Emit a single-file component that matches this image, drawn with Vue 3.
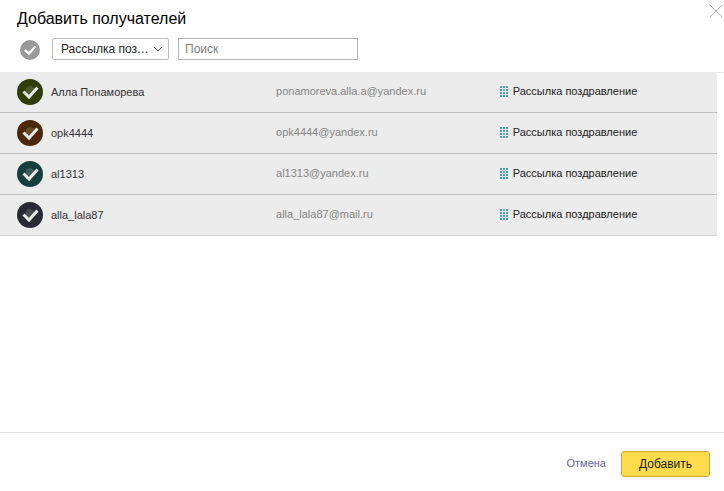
<script setup>
import { ref, computed } from 'vue'

const group = ref('greeting')
const query = ref('')
const recipients = ref([
  { id: 1, name: 'Алла Понаморева', email: 'ponamoreva.alla.a@yandex.ru', color: '#303c04', checked: true },
  { id: 2, name: 'opk4444', email: 'opk4444@yandex.ru', color: '#4a2a06', checked: true },
  { id: 3, name: 'al1313', email: 'al1313@yandex.ru', color: '#153f3c', checked: true },
  { id: 4, name: 'alla_lala87', email: 'alla_lala87@mail.ru', color: '#2a2a34', checked: true }
])

const visible = computed(() => {
  const q = query.value.trim().toLowerCase()
  return recipients.value.filter((r) => (r.name + ' ' + r.email).toLowerCase().includes(q))
})

const allChecked = computed({
  get: () => recipients.value.every((r) => r.checked),
  set: (value) => recipients.value.forEach((r) => { r.checked = value })
})

const dots = [0, 1, 2, 3].flatMap((row) => [0, 1, 2].map((col) => ({ x: col * 3, y: row * 3 })))
</script>

<template>
  <main class="dialog">
    <header class="head">
      <h1 class="title">Добавить получателей</h1>
      <div class="filters">
        <label class="pick pick-all">
          <input v-model="allChecked" type="checkbox" class="dot" aria-label="Выбрать всех" />
          <svg class="tick" viewBox="0 0 26 26" aria-hidden="true">
            <path d="M6.5 13 11.5 18 20 8" />
          </svg>
        </label>
        <div class="select">
          <select v-model="group" aria-label="Группа">
            <option value="greeting">Рассылка поздравление</option>
          </select>
          <svg class="chevron" viewBox="0 0 10 6" aria-hidden="true"><path d="M1 1 5 5 9 1" /></svg>
        </div>
        <input v-model="query" class="search" type="text" placeholder="Поиск" aria-label="Поиск" />
      </div>
      <button class="close" type="button" aria-label="Закрыть">
        <svg viewBox="0 0 14 14" aria-hidden="true"><path d="M1 1 13 13M13 1 1 13" /></svg>
      </button>
    </header>

    <div class="list">
      <table class="table">
        <tbody>
          <tr v-for="r in visible" :key="r.id">
            <td class="col-name">
              <label class="person">
                <span class="pick">
                  <input v-model="r.checked" type="checkbox" class="dot" :style="{ backgroundColor: r.color }" />
                  <svg class="tick" viewBox="0 0 26 26" aria-hidden="true">
                    <path class="silhouette" d="M9 15V9q4-4 8 0v6z" />
                    <path d="M6.5 12.5 12 18 20.5 8.5" />
                  </svg>
                </span>
                <span>{{ r.name }}</span>
              </label>
            </td>
            <td class="col-email">{{ r.email }}</td>
            <td class="col-group">
              <span class="group">
                <svg class="grid-icon" viewBox="0 0 8 11" aria-hidden="true">
                  <rect v-for="(d, i) in dots" :key="i" :x="d.x" :y="d.y" width="2" height="2" />
                </svg>
                Рассылка поздравление
              </span>
            </td>
          </tr>
        </tbody>
      </table>
    </div>

    <footer class="foot">
      <button class="cancel" type="button">Отмена</button>
      <button class="submit" type="button">Добавить</button>
    </footer>
  </main>
</template>

<style>
body {
  background: #fff;
}
</style>

<style scoped>
.dialog,
.dialog * {
  box-sizing: border-box;
}
.dialog {
  position: relative;
  display: flex;
  flex-direction: column;
  min-height: 100vh;
  font-family: "Liberation Sans", Arial, sans-serif;
  font-size: 12px;
  line-height: 16px;
  color: #333;
}
button,
input,
select {
  margin: 0;
  font: inherit;
}
svg {
  display: block;
  fill: none;
}
.head {
  padding: 9px 17px 12px;
  border-bottom: 1px solid #e8e8e8;
}
.title {
  margin: 0 0 9px;
  font-size: 16px;
  font-weight: 400;
  line-height: 20px;
  color: #000;
}
.filters {
  display: flex;
  align-items: center;
  gap: 9px;
}
.pick {
  display: grid;
  flex: none;
  width: 26px;
  height: 26px;
}
.pick-all {
  width: 20px;
  height: 20px;
  margin: 1px 3px 0;
}
.dot {
  grid-area: 1 / 1;
  width: 100%;
  height: 100%;
  appearance: none;
  border-radius: 50%;
  background: #999;
}
.tick {
  grid-area: 1 / 1;
  z-index: 1;
  width: 100%;
  height: 100%;
  pointer-events: none;
  stroke: #e9e9e9;
  stroke-width: 3;
}
.pick-all .tick {
  stroke: #fff;
}
.tick .silhouette {
  fill: #fff;
  fill-opacity: 0.15;
  stroke: none;
}
.dot:not(:checked) + .tick {
  visibility: hidden;
}
.select {
  display: grid;
  align-items: center;
  width: 117px;
}
.select select {
  grid-area: 1 / 1;
  width: 100%;
  height: 22px;
  padding: 0 18px 0 8px;
  appearance: none;
  border: 1px solid #bbb;
  border-radius: 2px;
  background: #fff;
  color: #222;
  text-overflow: ellipsis;
  white-space: nowrap;
  overflow: hidden;
}
.chevron {
  grid-area: 1 / 1;
  z-index: 1;
  justify-self: end;
  width: 10px;
  height: 6px;
  margin-right: 6px;
  pointer-events: none;
  stroke: #444;
}
.search {
  width: 180px;
  height: 22px;
  padding: 0 6px;
  border: 1px solid #b5b5b5;
  background: #fff;
  color: #222;
}
.search::placeholder {
  color: #808080;
  opacity: 1;
}
.close {
  position: absolute;
  top: 4px;
  right: 1px;
  padding: 0;
  border: 0;
  background: none;
}
.close svg {
  width: 14px;
  height: 14px;
  stroke: #aaa;
}
.list {
  flex: 1;
  padding-right: 7px;
}
.table {
  width: 100%;
  table-layout: fixed;
  border-collapse: separate;
  border-spacing: 0;
  font-size: 11px;
}
td {
  height: 41px;
  padding: 0;
  border-bottom: 1px solid #bdbdbd;
  background: #ececec;
  vertical-align: middle;
}
tr:last-child td {
  border-bottom-color: #d2d2d2;
}
.col-name {
  width: 38.5%;
  padding-left: 17px;
}
.person {
  display: flex;
  align-items: center;
  gap: 8px;
}
.col-email,
.col-group {
  padding-bottom: 2px;
}
.col-email {
  width: 31.2%;
  color: #858585;
}
.group {
  display: flex;
  align-items: center;
  gap: 5px;
  color: #222;
}
.grid-icon {
  width: 8px;
  height: 11px;
  fill: #4fa6a6;
}
.list {
  margin-top: -1px;
}
.foot {
  display: flex;
  align-items: center;
  justify-content: flex-end;
  gap: 15px;
  padding: 18px 14px 14px;
  border-top: 1px solid #ddd;
}
.cancel {
  padding: 0 0 2px;
  border: 0;
  background: none;
  font-size: 11px;
  color: #669;
}
.submit {
  height: 26px;
  padding: 0 17px 1px;
  border: 1px solid #c9aa3c;
  border-radius: 3px;
  background: #ffdb4d;
  color: #222;
}
</style>
